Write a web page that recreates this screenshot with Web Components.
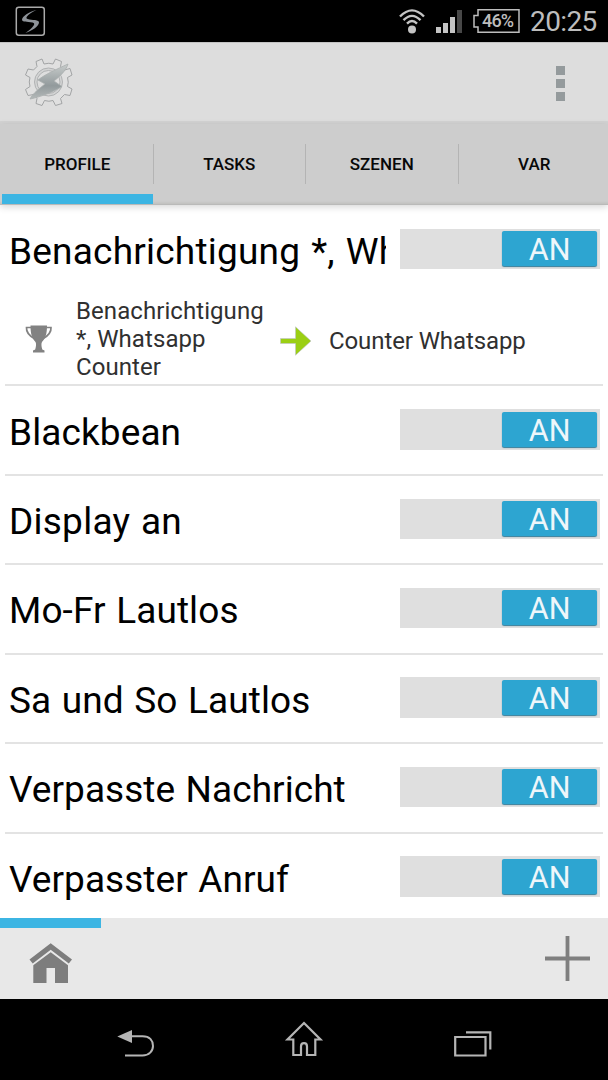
<!DOCTYPE html>
<html lang="de">
<head>
<meta charset="utf-8">
<title>Tasker</title>
<style>
html,body{margin:0;height:100%;background:#000}
body{font-family:Roboto,"Open Sans",sans-serif}
</style>
</head>
<body>
<tasker-app></tasker-app>
<script>
function define(name, html) {
  const t = document.createElement('template');
  t.innerHTML = html;
  customElements.define(name, class extends HTMLElement {
    constructor() {
      super();
      this.attachShadow({mode: 'open'}).appendChild(t.content.cloneNode(true));
    }
  });
}

define('status-bar', `
<style>
:host{display:flex;height:42px;background:#000;color:#bdbdbd;align-items:center;box-sizing:border-box;padding:0 10px 0 15px}
.logo{margin-right:auto}
svg{display:block;flex:none}
.battery{display:grid;width:47px;height:24px;margin-left:10px}
.battery>*{grid-area:1/1}
.battery span{font:500 18px/24px Roboto,sans-serif;padding-left:9px;letter-spacing:-.8px;white-space:nowrap}
.time{font-size:28px;line-height:42px;margin-left:10px;padding-top:2px;width:68px;white-space:nowrap;letter-spacing:-.6px}
</style>
<svg class="logo" width="31" height="31" viewBox="0 0 31 31"><rect x="1.3" y="1.3" width="28" height="28" rx="2.5" fill="none" stroke="#aaa" stroke-width="1.5"/><path d="M21.500 4C14 5.500 7 10.500 7 13.800c0 2.300 5 1.800 10.500 2.700 2 .4 2.300 1.500.8 3.600-1.300 1.900-4 4.400-7.800 6.800C17.500 25 24 20 24 16.600c0-2.800-4.500-2.500-9.500-3.200-2.900-.4-3.700-1-2.700-2.600 1.500-2.300 5.400-4.700 9.700-6.800z" fill="#8e9399"/></svg>
<svg width="28" height="26" viewBox="0 0 28 26" fill="none" stroke="#c4c4c4" stroke-width="2.400"><circle cx="14" cy="21.500" r="4" fill="#c4c4c4" stroke="none"/><path d="M2 8.500Q14-3.800 26 8.500M5.500 12.200Q14 3.500 22.500 12.200M9 15.600Q14 10.500 19 15.600"/></svg>
<svg style="margin-left:10px" width="27" height="24" viewBox="0 0 27 24" fill="#c4c4c4"><path d="M0 18h5v6H0zM7 14h5v10H7zM14 8h5v16h-5z"/><path d="M21 1h5v23h-5z" fill="#484848"/></svg>
<div class="battery"><svg width="47" height="24" viewBox="0 0 47 24" fill="none" stroke="#bdbdbd" stroke-width="1.500"><path d="M5 .8H46V23.200H5V18H1V6.500H5z"/></svg><span>46%</span></div>
<div class="time">20:25</div>`);

define('app-bar', `
<style>
:host{display:flex;height:82px;box-sizing:border-box;background:#ddd;border-top:1px solid #c3c3c3;border-bottom:3px solid #d3d3d3;align-items:center;justify-content:space-between;padding:0 43px 0 24px}
svg{display:block}
.menu{display:grid;gap:4px;padding-top:2px}
.menu i{width:9px;height:9px;background:#949a9c}
</style>
<svg width="50" height="50" viewBox="0 0 50 50"><defs><linearGradient id="g" x1="0" x2="0" y1="0" y2="1"><stop offset="0" stop-color="#c8cccb"/><stop offset=".62" stop-color="#929a9c"/><stop offset="1" stop-color="#b4b9b9"/></linearGradient></defs>
<path d="M18 2 20 7Q25 5.500 29 7L31.500 2 37.500 4.500 36.500 9.500 40.500 13 46 11.500 48 18 43.500 20.500Q45 25.500 43.500 29.500L48 32 46 38.500 40.500 37.500 36.500 41.500 38 46.500 31.500 48.500 29 43.500Q25 45 20.500 43.500L18 48.500 12 46.500 13 41.500 9.500 37.500 4 38.500 1.500 32.500 6 29.500Q4.500 25 6 20.500L1.500 18 4 12 9.500 13 13 9.500 12 4.500z" fill="#e0e0e0" stroke="#a2a4a5" stroke-width="1"/>
<circle cx="24.500" cy="25" r="14" fill="#d3d4d4" stroke="#b0b2b3"/><circle cx="24.500" cy="25" r="11.500" fill="#dedede" stroke="#b0b2b3"/>
<path d="M44 7C33 12 20 18 14 23L21 27C16 31 9 36 6 42 17 40 31 34 38 29.500L30 24C35 20 42 14 44 7z" fill="url(#g)" stroke="#a9afaf" stroke-width=".8"/></svg>
<div class="menu"><i></i><i></i><i></i></div>`);

define('tab-item', `
<style>
:host{display:block;position:relative;box-sizing:border-box;text-align:center;font-size:17px;font-weight:500;line-height:81px;color:#080808;letter-spacing:0;padding-left:2.500px}
:host(:last-child){padding-left:3.500px}
:host(:not(:last-child))::after{content:"";position:absolute;right:-2px;top:20px;width:1px;height:40px;background:#b4b4b4}
:host([active])::before{content:"";position:absolute;left:2px;right:-1px;bottom:1px;height:10px;background:#3cb5e3}
</style><slot></slot>`);

define('tab-bar', `
<style>
:host{display:grid;grid-template-columns:152px 152px 153px 151px;height:81px;background:linear-gradient(#cdcdcd 77px,#c1c1bf 80px,#b3b3b3);position:relative;z-index:1;box-shadow:0 2px 7px rgba(0,0,0,.16)}
</style><slot></slot>`);

define('toggle-switch', `
<style>
:host{display:flex;justify-content:flex-end;box-sizing:border-box;width:199.500px;height:40.400px;background:#dfdfdf;padding:2.400px 2.400px 2px 0;flex:none}
span{display:block;width:95px;height:35px;background:#2da5d1;border-radius:2px;color:#eef6fa;font-size:30.500px;line-height:38px;text-align:center;box-shadow:0 1px 1px #357e9b;letter-spacing:0}
</style><span><slot></slot></span>`);

define('profile-row', `
<style>
:host{display:block;margin:0 5px;border-bottom:2px solid #e3e3e3;box-sizing:border-box;height:89.430px;overflow:hidden}
:host([open]){height:181.400px}
:host(:last-child){border-bottom-color:transparent}
.head{display:flex;align-items:center;height:87.400px;justify-content:space-between;padding:0 3.500px 0 4px}
.name{width:376.500px;overflow:hidden;white-space:nowrap;font-size:37px;line-height:50px;padding-top:5px;color:#000;letter-spacing:var(--ls,.1px);word-spacing:var(--ws,1.200px)}
:host([open]) .name{padding-top:6px}
:host(:not([open])) toggle-switch{margin-bottom:1.400px}
</style>
<div class="head"><div class="name"><slot name="name"></slot></div><toggle-switch>AN</toggle-switch></div>
<slot></slot>`);

define('profile-link', `
<style>
:host{display:flex;height:92px;align-items:center;color:#303030;font-size:24px;line-height:27.800px}
svg{display:block;flex:none}
.cup{margin:2px 23px 0 20px}
.ctx{width:204px;letter-spacing:.07px;padding-top:3px}
.arr{margin:6px 17px 0 0}
.task{letter-spacing:-.1px;padding-top:7px;white-space:nowrap}
</style>
<svg class="cup" width="28" height="28" viewBox="0 0 28 28"><path d="M5.500.5h16.500c0 8.500-1.500 12.500-5 16.500-.8 1.500-.8 4 .3 7.500l2.200 1v2h-11.500v-2l2.200-1c1.100-3.500 1.100-6 .3-7.500C7 13 5.500 9 5.500.5z" fill="#828282"/><path d="M6 2.500H1.500C1 8 4.500 11 10 14M21.500 2.500H26C26.500 8 23 11 17.500 14" fill="none" stroke="#828282" stroke-width="1.700"/></svg>
<div class="ctx"><slot name="context"></slot></div>
<svg class="arr" width="32" height="30" viewBox="0 0 32 30"><path d="M.5 12.500H15.500V.8L31 15 15.500 29.200V17.500H.5z" fill="#9bcf13" stroke="#c0c3cf" stroke-width=".6"/></svg>
<div class="task"><slot name="task"></slot></div>`);

define('project-bar', `
<style>
:host{display:flex;height:81px;background:#e8e8e8;justify-content:space-between;position:relative}
:host::before{content:"";position:absolute;left:0;top:0;width:101px;height:10px;background:#3cb5e3}
svg{display:block}
.home{margin:25px 0 0 29px}.plus{margin:17px 17px 0 0}
</style>
<svg class="home" width="44" height="41" viewBox="0 0 44 41" fill="#7d7d7d"><path d="M21.700.2 43 16.500 39.800 20.500 21.700 6.800 3.700 20.500.5 16.500z"/><path d="M21.700 9.200 39 22.300V40H26V25H17.500V40H4.300V22.300z"/></svg>
<svg class="plus" width="47" height="47" viewBox="0 0 47 47"><path d="M23.500 1V46M1 23.500H46" stroke="#7f7f7f" stroke-width="3.800"/></svg>`);

define('nav-bar', `
<style>
:host{display:grid;grid-template-columns:38px 38px 38px;column-gap:131px;height:81px;background:#000;padding-left:117px}
svg{display:block;margin-top:22px;overflow:visible}
</style>
<svg width="38" height="38" viewBox="0 0 38 38"><path d="M.3 15.500 15 9V22z" fill="#b5b5b5"/><path d="M14 15.300H25.500C33 15.300 36 20 36 25S32 34.500 25.500 34.500H8" fill="none" stroke="#b5b5b5" stroke-width="2"/></svg>
<svg width="38" height="38" viewBox="0 0 38 38"><path d="M18 2 34.500 18.500H29.300V34H21V25.500C21 21 15 21 15 25.500V34H7.300V18.500H1.500z" fill="none" stroke="#b5b5b5" stroke-width="2.200"/></svg>
<svg width="38" height="38" viewBox="0 0 38 38"><path d="M.2 16H30.500V34.500H.2zM11 11.300H35.300V28.500" fill="none" stroke="#b5b5b5" stroke-width="2.200"/></svg>`);

define('tasker-app', `
<style>
:host{display:grid;grid-template-rows:42px 82px 81px 713px 81px 81px;width:608px;height:1080px}
main{background:#fff;overflow:hidden}
</style>
<status-bar></status-bar>
<app-bar></app-bar>
<tab-bar><tab-item active>PROFILE</tab-item><tab-item>TASKS</tab-item><tab-item>SZENEN</tab-item><tab-item>VAR</tab-item></tab-bar>
<main>
<profile-row open style="--ls:.22px;--ws:1.500px"><span slot="name">Benachrichtigung *, Wh</span>
<profile-link><span slot="context">Benachrichtigung<br>*, Whatsapp<br>Counter</span><span slot="task">Counter Whatsapp</span></profile-link></profile-row>
<profile-row><span slot="name">Blackbean</span></profile-row>
<profile-row style="--ls:.25px"><span slot="name">Display an</span></profile-row>
<profile-row><span slot="name">Mo-Fr Lautlos</span></profile-row>
<profile-row><span slot="name">Sa und So Lautlos</span></profile-row>
<profile-row style="--ls:.05px"><span slot="name">Verpasste Nachricht</span></profile-row>
<profile-row style="--ls:.05px"><span slot="name">Verpasster Anruf</span></profile-row>
</main>
<project-bar></project-bar>
<nav-bar></nav-bar>`);
</script>
</body>
</html>
